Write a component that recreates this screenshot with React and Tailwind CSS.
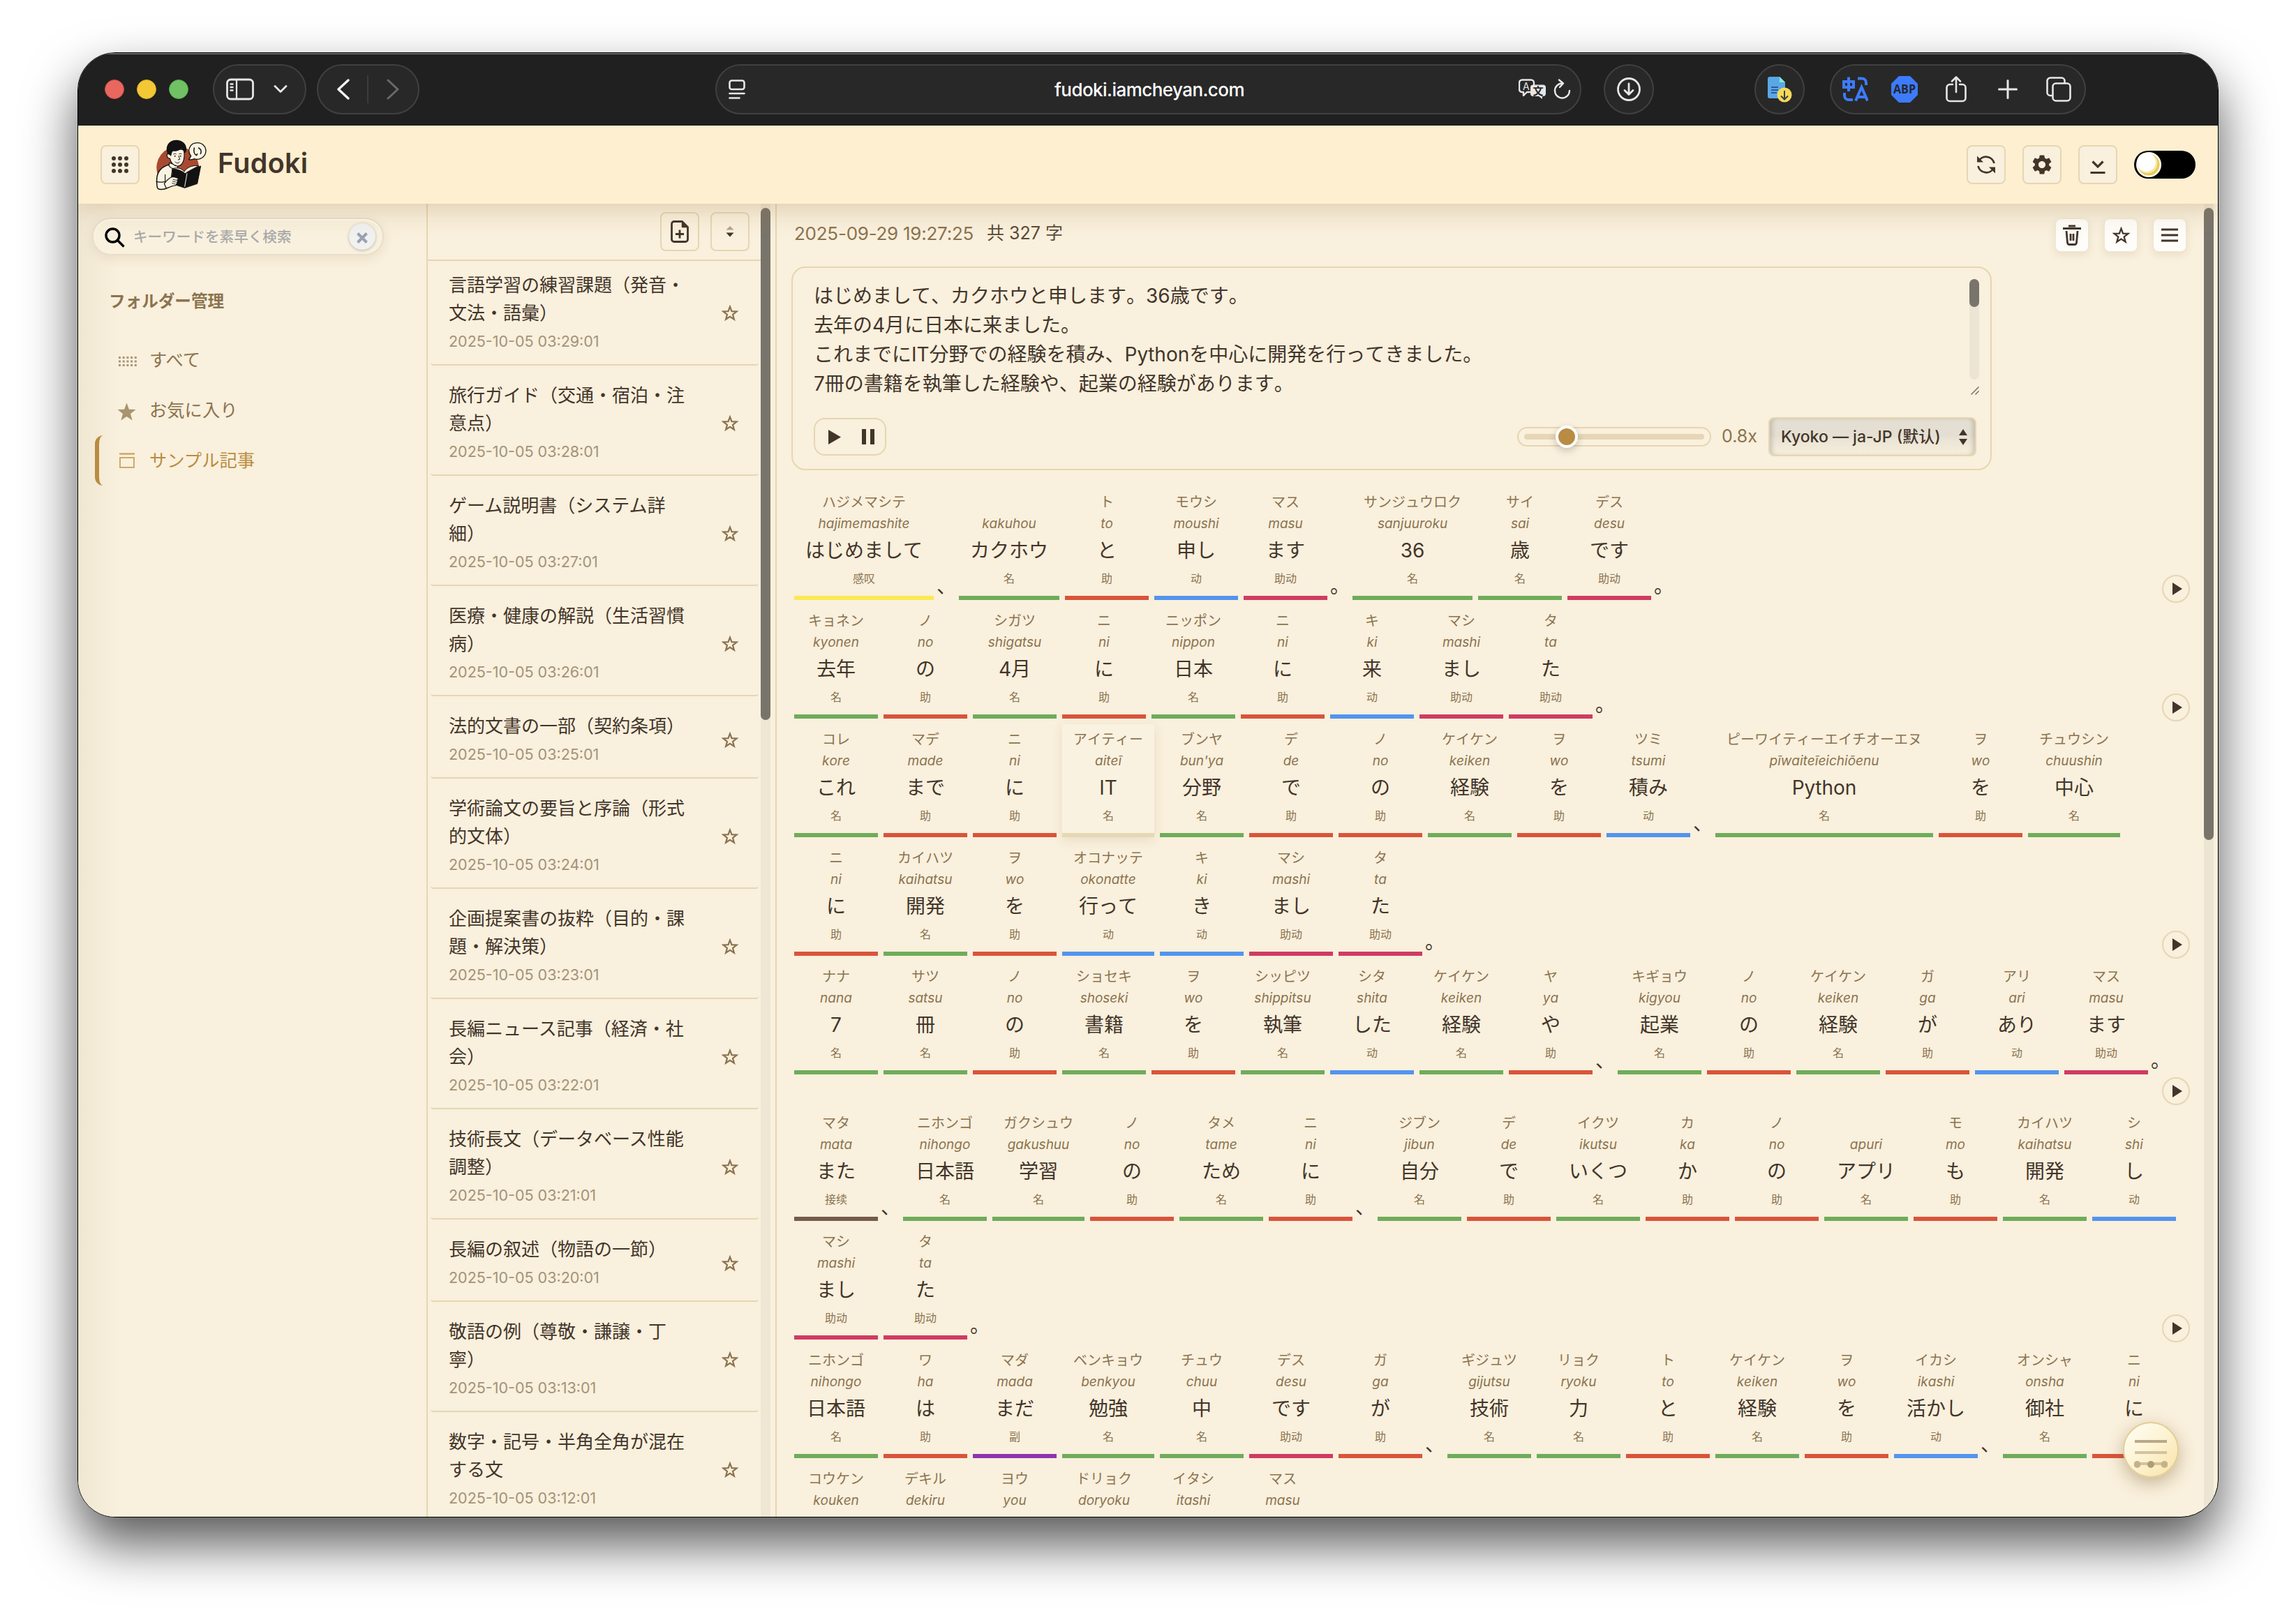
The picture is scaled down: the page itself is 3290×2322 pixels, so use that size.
import React from "react";

const POS_COLORS = {
  名: "bg-[#6fac5a]",
  助: "bg-[#d9543a]",
  动: "bg-[#5394ee]",
  助动: "bg-[#d03b63]",
  感叹: "bg-[#fae955]",
  接续: "bg-[#745b4a]",
  副: "bg-[#8d34b0]",
};

const PARAGRAPHS = [
  [
    "ハジメマシテ|hajimemashite|はじめまして|感叹 、 |kakuhou|カクホウ|名 ト|to|と|助 モウシ|moushi|申し|动 マス|masu|ます|助动 。 サンジュウロク|sanjuuroku|36|名 サイ|sai|歳|名 デス|desu|です|助动 。",
  ],
  [
    "キョネン|kyonen|去年|名 ノ|no|の|助 シガツ|shigatsu|4月|名 ニ|ni|に|助 ニッポン|nippon|日本|名 ニ|ni|に|助 キ|ki|来|动 マシ|mashi|まし|助动 タ|ta|た|助动 。",
  ],
  [
    "コレ|kore|これ|名 マデ|made|まで|助 ニ|ni|に|助 アイティー|aiteī|IT|名|active ブンヤ|bun'ya|分野|名 デ|de|で|助 ノ|no|の|助 ケイケン|keiken|経験|名 ヲ|wo|を|助 ツミ|tsumi|積み|动 、 ピーワイティーエイチオーエヌ|pīwaiteīeichiōenu|Python|名 ヲ|wo|を|助 チュウシン|chuushin|中心|名",
    "ニ|ni|に|助 カイハツ|kaihatsu|開発|名 ヲ|wo|を|助 オコナッテ|okonatte|行って|动 キ|ki|き|动 マシ|mashi|まし|助动 タ|ta|た|助动 。",
  ],
  [
    "ナナ|nana|7|名 サツ|satsu|冊|名 ノ|no|の|助 ショセキ|shoseki|書籍|名 ヲ|wo|を|助 シッピツ|shippitsu|執筆|名 シタ|shita|した|动 ケイケン|keiken|経験|名 ヤ|ya|や|助 、 キギョウ|kigyou|起業|名 ノ|no|の|助 ケイケン|keiken|経験|名 ガ|ga|が|助 アリ|ari|あり|动 マス|masu|ます|助动 。",
    "",
  ],
  [
    "マタ|mata|また|接续 、 ニホンゴ|nihongo|日本語|名 ガクシュウ|gakushuu|学習|名 ノ|no|の|助 タメ|tame|ため|名 ニ|ni|に|助 、 ジブン|jibun|自分|名 デ|de|で|助 イクツ|ikutsu|いくつ|名 カ|ka|か|助 ノ|no|の|助 |apuri|アプリ|名 モ|mo|も|助 カイハツ|kaihatsu|開発|名 シ|shi|し|动",
    "マシ|mashi|まし|助动 タ|ta|た|助动 。",
  ],
  [
    "ニホンゴ|nihongo|日本語|名 ワ|ha|は|助 マダ|mada|まだ|副 ベンキョウ|benkyou|勉強|名 チュウ|chuu|中|名 デス|desu|です|助动 ガ|ga|が|助 、 ギジュツ|gijutsu|技術|名 リョク|ryoku|力|名 ト|to|と|助 ケイケン|keiken|経験|名 ヲ|wo|を|助 イカシ|ikashi|活かし|动 、 オンシャ|onsha|御社|名 ニ|ni|に|助",
    "コウケン|kouken||名 デキル|dekiru||动 ヨウ|you||名 ドリョク|doryoku||名 イタシ|itashi||动 マス|masu||助动",
  ],
];

const ARTICLES = [
  [["言語学習の練習課題（発音・", "文法・語彙）"], "2025-10-05 03:29:01"],
  [["旅行ガイド（交通・宿泊・注", "意点）"], "2025-10-05 03:28:01"],
  [["ゲーム説明書（システム詳", "細）"], "2025-10-05 03:27:01"],
  [["医療・健康の解説（生活習慣", "病）"], "2025-10-05 03:26:01"],
  [["法的文書の一部（契約条項）"], "2025-10-05 03:25:01"],
  [["学術論文の要旨と序論（形式", "的文体）"], "2025-10-05 03:24:01"],
  [["企画提案書の抜粋（目的・課", "題・解決策）"], "2025-10-05 03:23:01"],
  [["長編ニュース記事（経済・社", "会）"], "2025-10-05 03:22:01"],
  [["技術長文（データベース性能", "調整）"], "2025-10-05 03:21:01"],
  [["長編の叙述（物語の一節）"], "2025-10-05 03:20:01"],
  [["敬語の例（尊敬・謙譲・丁", "寧）"], "2025-10-05 03:13:01"],
  [["数字・記号・半角全角が混在", "する文"], "2025-10-05 03:12:01"],
];

const STAR = "M12 2.6l2.5 6.6 7 .3-5.5 4.4 1.9 6.8-5.9-3.9-5.9 3.9L8 13.900l-5.500-4.400 7-.3z";

function Star({ className, filled, w = 2 }) {
  return (
    <svg viewBox="0 0 24 24" className={className} fill={filled ? "currentColor" : "none"} stroke="currentColor" strokeWidth={filled ? 0 : w}>
      <path d={STAR} />
    </svg>
  );
}

const PILL = "flex h-[72px] items-center rounded-full border-2 border-[#3f4141] bg-[#282828] shrink-0";

function BrowserBar() {
  return (
    <div className="relative z-20 flex h-[104px] shrink-0 items-center border-t-2 border-[#646864] bg-[#202020] pb-0.5 text-[#e6e6e6]">
      <div className="ml-[38px] flex gap-[18px]">
        <span className="size-7 rounded-full border border-[#d24a44] bg-[#e8685f]" />
        <span className="size-7 rounded-full border border-[#d9ae20] bg-[#f2c837]" />
        <span className="size-7 rounded-full border border-[#55a848] bg-[#70c264]" />
      </div>
      <div className={`${PILL} ml-[35px] w-[134px]`}>
        <svg className="ml-[17px] h-[32px] w-[40px]" viewBox="0 0 40 32" fill="none" stroke="currentColor" strokeWidth="2.800">
          <rect x="1.500" y="2" width="37" height="28" rx="5" />
          <path d="M15 2v28M5.500 8.500h5M5.500 13h5M5.500 17.500h5" strokeWidth="2.300" />
        </svg>
        <svg className="ml-[28px] h-[12px] w-[20px]" viewBox="0 0 20 12" fill="none" stroke="currentColor" strokeWidth="2.800" strokeLinecap="round" strokeLinejoin="round">
          <path d="M2 1.500l8 8 8-8" />
        </svg>
      </div>
      <div className={`${PILL} ml-[15px] w-[147px]`}>
        <svg className="ml-[26px] h-[30px] w-[19px]" viewBox="0 0 19 30" fill="none" stroke="#f4f4f4" strokeWidth="3.400" strokeLinecap="round" strokeLinejoin="round">
          <path d="M17 2L3 15l14 13" />
        </svg>
        <span className="ml-[25px] h-[40px] w-0.5 bg-[#3c3c3c]" />
        <svg className="ml-[26px] h-[30px] w-[19px]" viewBox="0 0 19 30" fill="none" stroke="#6a6a6a" strokeWidth="3" strokeLinecap="round" strokeLinejoin="round">
          <path d="M2 2l14 13L2 28" />
        </svg>
      </div>
      <div className={`${PILL} ml-[424px] w-[1241px] justify-between pl-[17px] pr-[12px]`}>
        <svg className="h-[28px] w-[74px]" viewBox="0 0 74 28" fill="none" stroke="currentColor" strokeWidth="2.600" strokeLinecap="round">
          <rect x="1.500" y="1.500" width="21" height="12.500" rx="3" />
          <path d="M1.500 20h21M1.500 26.500h14" />
        </svg>
        <span className="text-[26px] font-medium tracking-[-0.55px] text-white">fudoki.iamcheyan.com</span>
        <svg className="h-[30px] w-[76px]" viewBox="0 0 76 30" fill="none" stroke="currentColor" strokeWidth="2.400" strokeLinecap="round" strokeLinejoin="round">
          <path d="M16 19h-4l-5 5v-5H5a4 4 0 0 1-4-4V5.500a4 4 0 0 1 4-4h13a4 4 0 0 1 4 4V8" />
          <path d="M21 8.500h14a4 4 0 0 1 4 4V21a4 4 0 0 1-4 4h-1v4l-5-4h-8a4 4 0 0 1-4-4v-8.500a4 4 0 0 1 4-4z" fill="currentColor" stroke="none" />
          <text x="6" y="15.500" fontSize="14" fill="currentColor" stroke="none">A</text>
          <text x="20.500" y="22.500" fontSize="15" fontWeight="700" fill="#282828" stroke="none">文</text>
          <path d="M62.500 6.500a10.500 10.500 0 1 0 10.500 10.500M58 1.500l6 5-5 5.500" />
        </svg>
      </div>
      <div className={`${PILL} ml-[32px] w-[72px] justify-center`}>
        <svg className="size-[36px]" viewBox="0 0 36 36" fill="none" stroke="currentColor" strokeWidth="2.800" strokeLinecap="round" strokeLinejoin="round">
          <circle cx="18" cy="18" r="15.500" />
          <path d="M18 10v15M12 19.500l6 6 6-6" />
        </svg>
      </div>
      <div className={`${PILL} ml-[144px] w-[72px] justify-center`}>
        <svg className="h-[38px] w-[36px]" viewBox="0 0 36 38">
          <path d="M4 1h14l8 8v20a3 3 0 0 1-3 3H4a3 3 0 0 1-3-3V4a3 3 0 0 1 3-3z" fill="#5aa7e6" />
          <path d="M18 1l8 8h-8z" fill="#7eecd0" />
          <path d="M6 16h10M6 20h10M6 24h8" stroke="#2c5b9a" strokeWidth="2" />
          <circle cx="25" cy="27" r="10.500" fill="#f5da58" />
          <path d="M25 21v12M20 28.500l5 5 5-5" fill="none" stroke="#3b4048" strokeWidth="2" />
        </svg>
      </div>
      <div className={`${PILL} ml-[36px] w-[367px]`}>
        <svg className="ml-[15px] h-[38px] w-[38px]" viewBox="0 0 38 38" fill="none" stroke="#3d7bfd" strokeWidth="4">
          <path d="M3 8h14v8H3zM10 1.500V22" />
          <path d="M23 3.500h6a6 6 0 0 1 6 6V13M4 24v4a6 6 0 0 0 6 6h6" />
          <path d="M20 35.500L28.500 16 37 35.500M23 30h11" />
        </svg>
        <svg className="ml-[33px] size-[38px]" viewBox="0 0 38 38">
          <path d="M11 0h16l11 11v16L27 38H11L0 27V11z" fill="#3d7bfd" />
          <text x="19" y="24.800" textAnchor="middle" fontSize="17.500" fontWeight="700" fill="#24282f" textLength="32" lengthAdjust="spacingAndGlyphs" fontFamily="Open Sans, sans-serif">ABP</text>
        </svg>
        <svg className="ml-[40px] h-[38px] w-[30px]" viewBox="0 0 30 38" fill="none" stroke="currentColor" strokeWidth="2.600" strokeLinecap="round" strokeLinejoin="round">
          <path d="M10 12H6a4.500 4.500 0 0 0-4.500 4.500v15A4.500 4.500 0 0 0 6 36h18a4.500 4.500 0 0 0 4.500-4.500v-15A4.500 4.500 0 0 0 24 12h-4M15 23V2M9 7.500L15 1.500l6 6" />
        </svg>
        <svg className="ml-[45px] size-[28px]" viewBox="0 0 28 28" fill="none" stroke="currentColor" strokeWidth="3" strokeLinecap="round">
          <path d="M14 1.500v25M1.500 14h25" />
        </svg>
        <svg className="ml-[41px] h-[36px] w-[36px]" viewBox="0 0 36 36" fill="none" stroke="currentColor" strokeWidth="2.600">
          <path d="M9.500 27H6a4.500 4.500 0 0 1-4.500-4.500V6A4.500 4.500 0 0 1 6 1.500h16A4.500 4.500 0 0 1 26.500 6v3.500" />
          <rect x="9.500" y="9.500" width="25" height="25" rx="4.500" />
        </svg>
      </div>
    </div>
  );
}

function Logo() {
  return (
    <svg className="ml-[23px] h-[73px] w-[73px] shrink-0" viewBox="251 28 219 219" strokeLinecap="round" strokeLinejoin="round">
      <path d="M258 172a91 91 0 1 1 176 0z" fill="#a9492f" />
      <path d="M256 208c-2-40 18-62 52-72l34 18 12 0-16 66-36 16c-16 8-40 10-43 0-3-8-3-18-3-28z" fill="#fbf3e2" stroke="#121212" strokeWidth="4.500" />
      <path d="M254 209c14 3 26 3 38 0M292 179v30" fill="none" stroke="#121212" strokeWidth="3.500" />
      <path d="M310 128l-2 12c6 10 20 16 34 14l6-14z" fill="#fbf3e2" stroke="#121212" strokeWidth="3.500" />
      <path d="M312 90c-8-4-14 2-12 9 2 8 7 11 12 10 4 18 16 32 32 33 18 0 28-18 30-42V72l-56-6z" fill="#fbf3e2" stroke="#121212" strokeWidth="3.500" />
      <path d="M303 90c-14-30 4-60 36-60 30-1 50 22 43 50l-7 8c-2-10-8-16-14-22-8 10-22 14-36 12-5 4-5 12-8 22l-6-6z" fill="#121212" />
      <path d="M328 91c4-3 8-3 11-1M352 90c4-2 7-2 10 0" fill="none" stroke="#121212" strokeWidth="3" />
      <circle cx="334" cy="99" r="3" fill="#121212" />
      <circle cx="358" cy="99" r="3" fill="#121212" />
      <path d="M350 98l5 15-7 2M335 124c6 7 14 7 19 0" fill="none" stroke="#121212" strokeWidth="3" />
      <path d="M324 152l50 14 71-24-15 76-54 18-60-20z" fill="#121212" stroke="#121212" strokeWidth="3" />
      <path d="M324 153c22-7 40 0 50 13 8-14 30-29 62-25l-46 25-12 8c-14-12-32-18-54-21z" fill="#fbf3e2" stroke="#121212" strokeWidth="3" />
      <path d="M386 174l-10 56" stroke="#fbf3e2" strokeWidth="3" />
      <path d="M288 218c10-14 22-26 36-30 8 0 16 4 22 6 4 4 2 8-4 8 6 2 6 8 0 9 4 3 2 8-3 8 2 5-2 7-8 7-12 2-24 8-34 12z" fill="#fbf3e2" stroke="#121212" strokeWidth="3.500" />
      <path d="M326 200l14 3M324 208l14 3M322 216l12 3" stroke="#121212" strokeWidth="2.500" />
      <path d="M403 99l-9 15c8 2 16 0 23-3 22 8 50-8 50-34 0-20-16-35-36-35-34 0-46 34-28 57z" fill="#fbf3e2" stroke="#121212" strokeWidth="4" />
      <path d="M417 64c-3 14-1 27 10 32l3-6M436 64c10 6 14 14 8 25" fill="none" stroke="#121212" strokeWidth="4.500" />
    </svg>
  );
}

const HEADER_BTN = "flex size-14 shrink-0 items-center justify-center rounded-lg border-2 border-[#e6d6b2] bg-[#f9f0dd] text-[#43352a]";

function AppHeader() {
  return (
    <div className="relative z-10 flex h-[112px] shrink-0 items-center bg-[#feefd0] shadow-[0_4px_40px_rgba(150,110,50,0.32)]">
      <div className={`${HEADER_BTN} ml-8`}>
        <div className="grid grid-cols-3 gap-[3px]">
          {Array.from({ length: 9 }, (_, i) => (
            <span key={i} className="size-[6px] rounded-full bg-[#43352a]" />
          ))}
        </div>
      </div>
      <Logo />
      <span className="ml-[16px] mt-[-3px] text-[39.500px] font-semibold tracking-[0.3px] text-[#43352a]">Fudoki</span>
      <div className="ml-auto mr-8 flex items-center gap-6">
        <div className={HEADER_BTN}>
          <svg className="size-[30px]" viewBox="0 0 30 30" fill="none" stroke="currentColor" strokeWidth="2.800">
            <path d="M4 10.500A12 12 0 0 1 26.500 13M26 19.500A12 12 0 0 1 3.500 17" />
            <path d="M2 2.500v9h9zM28 27.500v-9h-9z" fill="currentColor" stroke="none" />
          </svg>
        </div>
        <div className={HEADER_BTN}>
          <svg className="size-[34px]" viewBox="0 0 24 24" fill="currentColor">
            <path d="M19.140 12.940c.04-.3.060-.61.060-.94 0-.32-.02-.64-.07-.94l2.030-1.580a.49.49 0 0 0 .12-.61l-1.920-3.320a.488.488 0 0 0-.59-.22l-2.390.96c-.5-.38-1.030-.7-1.620-.94l-.36-2.540a.484.484 0 0 0-.48-.41h-3.840c-.24 0-.43.17-.47.41l-.36 2.540c-.59.24-1.130.57-1.620.94l-2.390-.96c-.22-.08-.47 0-.59.22L2.740 8.870c-.12.21-.08.47.12.61l2.030 1.580c-.05.3-.09.63-.09.94s.02.64.07.94l-2.030 1.580a.49.49 0 0 0-.12.61l1.920 3.320c.12.22.37.29.59.22l2.390-.96c.5.38 1.030.7 1.620.94l.36 2.540c.05.24.24.41.48.41h3.840c.24 0 .44-.17.47-.41l.36-2.540c.59-.24 1.130-.56 1.620-.94l2.390.96c.22.08.47 0 .59-.22l1.920-3.320c.12-.22.070-.47-.12-.61l-2.010-1.580zM12 15.600c-1.980 0-3.600-1.620-3.600-3.600s1.620-3.600 3.600-3.600 3.600 1.620 3.600 3.600-1.620 3.600-3.600 3.600z" />
          </svg>
        </div>
        <div className={HEADER_BTN}>
          <svg className="mt-1.5 h-[22px] w-[24px]" viewBox="0 0 24 22" fill="none" stroke="currentColor" strokeWidth="3.200">
            <path d="M4.500 3.500l7.500 7.500 7.500-7.500M1.500 19.500h21" />
          </svg>
        </div>
        <div className="flex h-10 w-[88px] items-center rounded-full bg-black pl-[3px]">
          <svg className="size-[36px]" viewBox="0 0 36 36">
            <circle cx="18" cy="18" r="18" fill="#fff" />
            <circle cx="18" cy="18" r="15.500" fill="#ecca52" />
            <circle cx="16" cy="16" r="14.500" fill="#f5e7a8" />
            <circle cx="14.500" cy="14.500" r="13.500" fill="#fff" />
          </svg>
        </div>
      </div>
    </div>
  );
}

function Sidebar() {
  return (
    <div className="w-[499px] shrink-0 bg-[linear-gradient(to_right,#f0e7d3,#f9f0dd_60px)]">
      <div className="ml-5 mt-5 flex h-[54px] w-[418px] items-center rounded-full border-2 border-[#e8dfca] bg-[#f9f1de] shadow-[0_4px_16px_rgba(120,90,40,0.12),inset_0_2px_1px_rgba(255,255,255,0.7)]">
        <svg className="ml-4 mt-0.5 size-[29px] shrink-0" viewBox="0 0 29 29" fill="none" stroke="#000" strokeWidth="3.400">
          <circle cx="11.500" cy="11.500" r="9.500" />
          <path d="M18 18l9.500 9.500" />
        </svg>
        <span className="ml-[12px] mt-[3px] text-[20.600px] font-medium text-[#a9a9a9]">キーワードを素早く検索</span>
        <span className="ml-auto mr-[10px] flex size-[38px] items-center justify-center rounded-full bg-[#f1f1f0] shadow-[0_1px_4px_rgba(0,0,0,0.25)]">
          <svg className="mt-[3px] size-[16px]" viewBox="0 0 16 16" stroke="#97a2b2" strokeWidth="4">
            <path d="M1.500 1.500l13 13M14.500 1.500l-13 13" />
          </svg>
        </span>
      </div>
      <div className="ml-[44px] mt-[46px] h-[40px] text-[23.600px] font-bold leading-[40px] text-[#8b7350]">フォルダー管理</div>
      <div className="mt-[28px] pl-6 text-[25.300px] text-[#8b7350]">
        <div className="flex h-[72px] items-center pl-[34px]">
          <svg className="mt-1 h-[14px] w-[26px]" viewBox="0 0 26 14" fill="#a8977a">
            {[0, 5.5, 11].map((y) => [0, 5.7, 11.4, 17.1, 22.8].map((x) => <rect key={`${x}-${y}`} x={x} y={y} width="3" height="3" />))}
          </svg>
          <span className="ml-[18px]">すべて</span>
        </div>
        <div className="flex h-[72px] items-center pl-[29px]">
          <Star filled className="mt-1 size-[33px] text-[#a8946f]" />
          <span className="ml-[16px]">お気に入り</span>
        </div>
        <div className="flex h-[72px] w-[450px] items-center rounded-[12px] border-l-[6px] border-[#b98c40] pl-[28px] text-[#b98c40]">
          <svg className="ml-[1px] h-[22px] w-[22px]" viewBox="0 0 22 22" fill="none" stroke="#cdaa6c" strokeWidth="2">
            <path d="M0 1.500h22" strokeWidth="2.600" />
            <rect x="1" y="7" width="20" height="14" />
          </svg>
          <span className="ml-[21px]">サンプル記事</span>
        </div>
      </div>
    </div>
  );
}

const OUTLINE_BTN = "flex size-14 items-center justify-center rounded-lg border-2 border-[#e6d6b2] text-[#43352a]";

function ArticleList() {
  return (
    <div className="flex w-[500px] shrink-0 overflow-hidden border-l-2 border-[#e6d6b2]">
      <div className="flex w-[477px] flex-col">
        <div className="flex h-[82px] shrink-0 justify-end gap-4 border-b-2 border-[#e6d6b2] pr-4 pt-3">
          <div className={OUTLINE_BTN}>
            <svg className="h-[32px] w-[26px]" viewBox="0 0 26 32" fill="none" stroke="currentColor" strokeWidth="2.800" strokeLinejoin="round">
              <path d="M16.500 1.500H5A3.500 3.500 0 0 0 1.500 5v22A3.500 3.500 0 0 0 5 30.500h16a3.500 3.500 0 0 0 3.500-3.500V9.500z" />
              <path d="M16.500 1.500v8h8z" fill="currentColor" strokeWidth="1.500" />
              <path d="M13 13.500v12M7 19.500h12" />
            </svg>
          </div>
          <div className={OUTLINE_BTN}>
            <svg className="h-[16px] w-[12px]" viewBox="0 0 12 16" fill="currentColor">
              <path d="M0.500 5.500L6 0l5.500 5.500z" opacity="0.400" />
              <path d="M0.500 9.500L6 15.500l5.500-6z" />
            </svg>
          </div>
        </div>
        <div className="min-h-0 flex-1 overflow-hidden">
          <div className="-mt-2 pl-1 pr-[3px]">
            {ARTICLES.map(([lines, date]) => (
              <div key={date} className="flex items-center justify-between rounded-[4px] border-b-2 border-[#e6d6b2] pl-[26px] pr-[29px]">
                <div className="pb-[13px] pt-[23px]">
                  {lines.map((line) => (
                    <div key={line} className="h-10 whitespace-nowrap text-[26px] leading-[40px] text-[#43352a]">{line}</div>
                  ))}
                  <div className="h-10 text-[21.500px] leading-[40px] text-[#a39378]">{date}</div>
                </div>
                <Star className="mt-[9px] size-[24px] shrink-0 text-[#8b7350]" w={2.2} />
              </div>
            ))}
          </div>
        </div>
      </div>
      <div className="h-full w-[14px] bg-[#efe6d3] pt-1.5">
        <div className="h-[734px] rounded-full bg-[#79746b]" />
      </div>
    </div>
  );
}

function Token({ source }) {
  if (source === "、" || source === "。") {
    return <span className="-mx-1 mb-0.5 w-7 text-[28px] leading-[36px] text-[#43352a]">{source}</span>;
  }
  const [kana, romaji, text, pos, active] = source.split("|");
  return (
    <div className={`flex h-[162px] min-w-[120px] shrink-0 flex-col items-center whitespace-nowrap text-[#8b7350] [font-kerning:none] ${active ? "rounded-[2px] bg-[#faf2e0] shadow-[0_4px_16px_rgba(120,90,40,0.13)]" : ""}`}>
      <span className="mt-[7px] h-[30px] px-4 text-[20px] leading-[30px]">{kana}</span>
      <span className="h-[32px] text-[19px] italic leading-[32px]">{romaji}</span>
      <span className="h-[44px] px-4 text-[28px] leading-[44px] text-[#43352a]">{text}</span>
      <span className="h-[36px] text-[16px] leading-[36px]">{text ? pos : ""}</span>
      <span className={`mt-auto h-[6px] w-full ${active ? "bg-[#e5d8b3]" : POS_COLORS[pos]}`} />
    </div>
  );
}

function PlayButton() {
  return (
    <span className="-mb-1 -mr-5 ml-auto flex size-10 shrink-0 items-center justify-center rounded-full border-2 border-[#e6d6b2]">
      <svg className="ml-1 h-[18px] w-[14px]" viewBox="0 0 14 18" fill="#43352a">
        <path d="M0 0l14 9-14 9z" />
      </svg>
    </span>
  );
}

function Analysis() {
  return (
    <div className="mt-6 flex w-[1980px] flex-col gap-2">
      {PARAGRAPHS.map((rows, p) =>
        rows.map((row, r) => (
          <div key={`${p}-${r}`} className={`flex items-end gap-2 ${row ? "h-[162px]" : "h-8"}`}>
            {row && row.split(/ (?=\S)/).map((t, i) => <Token key={i} source={t} />)}
            {r === rows.length - 1 && p < PARAGRAPHS.length - 1 && <PlayButton />}
          </div>
        ))
      )}
    </div>
  );
}

function Editor() {
  return (
    <div className="flex h-[292px] w-[1720px] shrink-0 flex-col rounded-[20px] border-2 border-[#e6d6b2] pl-[30px] pr-[16px]">
      <div className="flex h-[186px] shrink-0 justify-between pt-[16px]">
        <div className="mt-[3px] text-[28px] leading-[42px] text-[#43352a] [font-kerning:none]">
          <div>はじめまして、カクホウと申します。36歳です。</div>
          <div>去年の4月に日本に来ました。</div>
          <div>これまでにIT分野での経験を積み、Pythonを中心に開発を行ってきました。</div>
          <div>7冊の書籍を執筆した経験や、起業の経験があります。</div>
        </div>
        <div className="flex flex-col items-end">
          <div className="h-[144px] w-[14px] rounded-full bg-[#ede5d3]">
            <div className="h-10 rounded-full bg-[#79746b]" />
          </div>
          <svg className="mt-[10px] size-[12px]" viewBox="0 0 12 12" stroke="#6d675c" strokeWidth="1.400">
            <path d="M0.500 11.500l11-11M6.500 11.500l5-5" />
          </svg>
        </div>
      </div>
      <div className="mt-[28px] flex items-center pr-[4px]">
        <div className="flex h-[54px] w-[104px] items-center rounded-[16px] border-2 border-[#e6d6b2]">
          <svg className="ml-[19px] h-[21px] w-[18px]" viewBox="0 0 18 21" fill="#43352a">
            <path d="M0 0l18 10.500L0 21z" />
          </svg>
          <svg className="ml-[30px] h-[22px] w-[18px]" viewBox="0 0 18 22" fill="#43352a">
            <path d="M0 0h6v22H0zM12 0h6v22h-6z" />
          </svg>
        </div>
        <div className="relative ml-auto flex h-[28px] w-[278px] items-center rounded-[14px] border-2 border-[#e6d6b2] px-2">
          <span className="h-2 w-full rounded-sm bg-[#e6d6b5]" />
          <span className="absolute left-[53px] top-[-4px] size-[32px] rounded-full border-4 border-white bg-[#b98c43] shadow-[0_4px_12px_rgba(0,0,0,0.2)]" />
        </div>
        <span className="ml-[15px] w-[67px] text-[25px] text-[#8b7350]">0.8x</span>
        <div className="flex h-[56px] w-[298px] items-center justify-between rounded-lg border-2 border-[#e6d6b2] bg-[linear-gradient(to_bottom,#e4dfd2_0%,#e4dfd2_50%,#e9e3d5_52%,#f7efdc_100%)] pl-[16px] pr-[11px] text-[#43352a] shadow-[inset_6px_0_6px_-3px_rgba(90,80,60,0.25),inset_-6px_0_6px_-3px_rgba(90,80,60,0.25)]">
          <span className="whitespace-nowrap text-[23px] font-medium">Kyoko — ja-JP (默认)</span>
          <svg className="h-[23px] w-[12px]" viewBox="0 0 12 23" fill="currentColor">
            <path d="M0 9l6-9 6 9zM0 14l6 9 6-9z" />
          </svg>
        </div>
      </div>
    </div>
  );
}

const WHITE_BTN = "flex size-12 items-center justify-center rounded-lg border border-[#eee6d6] bg-[#fffdf9] text-[#43352a] shadow-[0_4px_12px_rgba(120,90,40,0.12)]";

function Reader() {
  return (
    <div className="flex min-w-0 flex-1 overflow-hidden border-l-2 border-[#e6d6b2]">
      <div className="flex flex-1 flex-col pl-[21px]">
        <div className="flex h-[90px] shrink-0 items-center pr-[25px]">
          <span className="ml-[4px] mt-[-5px] text-[26px] tracking-[-0.25px] text-[#8b7350]">2025-09-29 19:27:25</span>
          <span className="ml-[19px] mt-[-5px] text-[25px] text-[#5b4a37]">共 327 字</span>
          <div className="ml-auto flex gap-[22px]">
            <div className={WHITE_BTN}>
              <svg className="h-[30px] w-[28px]" viewBox="0 0 28 30" fill="none" stroke="currentColor" strokeWidth="2.800">
                <path d="M1 5.500h26M9 2h10M6 9l1.500 17a3 3 0 0 0 3 2.500h7a3 3 0 0 0 3-2.500L22 9M12 13v10M16 13v10" />
              </svg>
            </div>
            <div className={WHITE_BTN}>
              <Star className="size-[25px]" w={2.2} />
            </div>
            <div className={WHITE_BTN}>
              <svg className="h-[20px] w-[24px]" viewBox="0 0 24 20" stroke="currentColor" strokeWidth="2.800">
                <path d="M0 2h24M0 10h24M0 18h24" />
              </svg>
            </div>
          </div>
        </div>
        <Editor />
        <div className="pl-1">
          <Analysis />
        </div>
      </div>
      <div className="mr-[6px] h-full w-[14px] shrink-0 bg-[#ede5d3] pt-1.5">
        <div className="h-[906px] rounded-full bg-[#79746b]" />
      </div>
    </div>
  );
}

export default function App() {
  return (
    <div className="h-[2322px] w-[3290px] overflow-hidden bg-white pl-[111px] pt-[75px] font-['Inter','Noto_Sans_CJK_JP',sans-serif]">
      <div className="relative flex h-[2100px] w-[3068px] flex-col overflow-hidden rounded-[54px] border border-black bg-[#f9f0dd] shadow-[0_38px_76px_rgba(0,0,0,0.66)]">
        <BrowserBar />
        <AppHeader />
        <div className="flex min-h-0 flex-1">
          <Sidebar />
          <ArticleList />
          <Reader />
        </div>
        <div className="absolute bottom-[56px] right-[56px] flex size-[80px] items-center justify-center rounded-full border-2 border-[#e2cd95] bg-[linear-gradient(135deg,#fffef6,#fdf3d2_50%,#f9e2a6)] shadow-[0_8px_24px_rgba(120,90,40,0.4)]">
          <svg className="mt-[10px] h-[46px] w-[48px]" viewBox="0 0 48 46">
            <path d="M1 6h46" stroke="#b9a88a" strokeWidth="4" />
            <path d="M1 22h46" stroke="#d3c3a0" strokeWidth="4" />
            <path d="M1 38h46" stroke="#d3c3a0" strokeWidth="4" />
            <circle cx="4.500" cy="39" r="5" fill="#c4b28c" />
            <circle cx="24" cy="39" r="5" fill="#b09d78" />
            <circle cx="43.500" cy="39" r="5" fill="#c4b28c" />
          </svg>
        </div>
      </div>
    </div>
  );
}
